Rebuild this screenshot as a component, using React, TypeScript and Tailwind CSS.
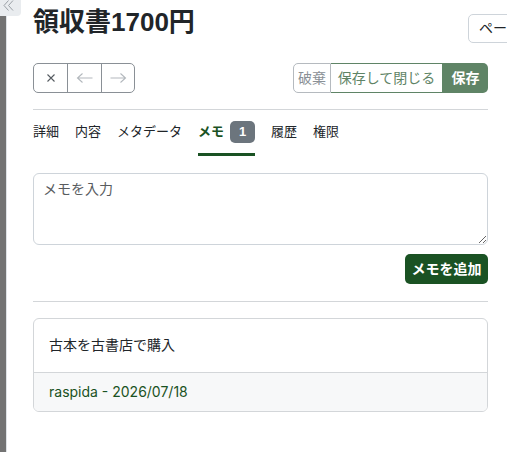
import React from "react";

const jp = "font-['Liberation_Sans','Noto_Sans_CJK_JP',sans-serif]";

function Rail() {
  return (
    <>
      <div className="mt-[16px] w-[6px] shrink-0 bg-[#737373]" />
      <div className="w-px shrink-0 bg-[#dee2e6]" />
      <button className="absolute left-0 top-0 h-[16px] w-[21px] rounded-br-[4px] bg-[#e9ecef]">
        <svg
          className="absolute left-[2px] top-[-1px]"
          width="13"
          height="13"
          viewBox="0 0 13 13"
          fill="none"
          stroke="#9aa0a6"
          strokeWidth="1"
        >
          <path d="M6.5 1.5 L2 6.5 L6.5 11.5" />
          <path d="M11 1.5 L6.5 6.5 L11 11.5" />
        </svg>
      </button>
    </>
  );
}

function Tab({ label, active, badge }: { label: string; active?: boolean; badge?: string }) {
  return (
    <div
      className={`flex items-center gap-[6px] border-b-[3px] pb-[10px] pt-[11px] text-[13px] ${
        active ? "border-[#1a5223] font-bold text-[#1a5223]" : "border-transparent text-[#212529]"
      }`}
    >
      <span className="leading-[22px]">{label}</span>
      {badge && (
        <span className="flex h-[22px] w-[25px] items-center justify-center rounded-[5px] bg-[#6c757d] text-[13px] font-bold text-white">
          {badge}
        </span>
      )}
    </div>
  );
}

export default function App() {
  return (
    <div className={`relative flex h-[452px] w-[507px] overflow-hidden bg-white text-[14px] text-[#212529] ${jp}`}>
      <Rail />
      <main className="ml-[26px] flex w-[455px] shrink-0 flex-col">
        {/* title row */}
        <div className="mr-[-80px] flex items-start">
          <h1 className="flex-1 pt-[6px] text-[26px] font-bold leading-[33px]">領収書1700円</h1>
          <button className="mt-[14px] h-[29px] w-[100px] shrink-0 rounded-[5px] border border-[#ced4da] px-[10px] text-left leading-[27px] text-[#212529]">
            ページ情報
          </button>
        </div>

        {/* toolbar */}
        <div className="mt-[20px] flex h-[30px] items-stretch">
          <div className="flex overflow-hidden rounded-[5px] border border-[#8a9096]">
            <button className="flex w-[33px] items-center justify-center text-[#555b61]">
              <svg width="10" height="10" viewBox="0 0 10 10" stroke="currentColor" strokeWidth="1.1">
                <path d="M1.5 1.5 L8.5 8.5 M8.5 1.5 L1.5 8.5" />
              </svg>
            </button>
            <button className="flex w-[34px] items-center justify-center border-l border-[#8a9096] text-[#b3b8bd]">
              <svg width="18" height="12" viewBox="0 0 18 12" fill="none" stroke="currentColor" strokeWidth="1.1">
                <path d="M16.5 6 H1.5 M6.5 1.5 L1.5 6 L6.5 10.5" />
              </svg>
            </button>
            <button className="flex w-[33px] items-center justify-center border-l border-[#8a9096] text-[#b3b8bd]">
              <svg width="18" height="12" viewBox="0 0 18 12" fill="none" stroke="currentColor" strokeWidth="1.1">
                <path d="M1.5 6 H16.5 M11.5 1.5 L16.5 6 L11.5 10.5" />
              </svg>
            </button>
          </div>
          <div className="ml-auto flex">
            <button className="w-[38px] rounded-l-[5px] border border-[#b5babf] text-[#8a9096]">破棄</button>
            <button className="w-[112px] border border-l-0 border-[#5f8466] text-[#5f8466]">保存して閉じる</button>
            <button className="w-[45px] rounded-r-[5px] bg-[#5f8466] font-bold text-white">保存</button>
          </div>
        </div>

        <hr className="mt-[16px] border-t border-[#d3d6d9]" />

        {/* tabs */}
        <nav className="flex gap-[16px]">
          <Tab label="詳細" />
          <Tab label="内容" />
          <Tab label="メタデータ" />
          <Tab label="メモ" active badge="1" />
          <Tab label="履歴" />
          <Tab label="権限" />
        </nav>

        {/* new note */}
        <textarea
          placeholder="メモを入力"
          className="mt-[17px] h-[72px] w-full resize-y rounded-[6px] border border-[#ced4da] px-[9px] py-[5px] leading-[21px] outline-none placeholder:text-[#595c5f]"
        />
        <button className="ml-auto mt-[9px] h-[30px] w-[83px] rounded-[5px] bg-[#1a5223] font-bold text-white">
          メモを追加
        </button>

        <hr className="mt-[17px] border-t border-[#d3d6d9]" />

        {/* note list */}
        <div className="mt-[16px] overflow-hidden rounded-[6px] border border-[#d3d6d9]">
          <div className="px-[15px] py-[16px] leading-[21px]">古本を古書店で購入</div>
          <div className="border-t border-[#d3d6d9] bg-[#f7f8f9] px-[15px] py-[9px] font-['Inter','Noto_Sans_CJK_JP',sans-serif] leading-[20px] text-[#1a5223]">
            raspida - 2026/07/18
          </div>
        </div>
      </main>
    </div>
  );
}
